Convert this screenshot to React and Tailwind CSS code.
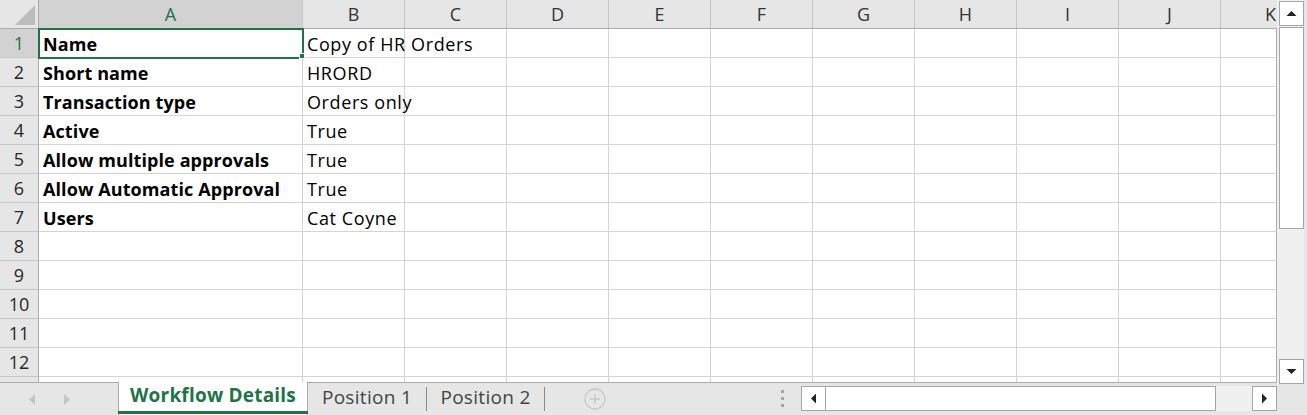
import React from "react";

const COLUMNS = [
  { label: "A", width: "w-[264px]" },
  { label: "B", width: "w-[102px]" },
  { label: "C", width: "w-[102px]" },
  { label: "D", width: "w-[102px]" },
  { label: "E", width: "w-[102px]" },
  { label: "F", width: "w-[102px]" },
  { label: "G", width: "w-[102px]" },
  { label: "H", width: "w-[102px]" },
  { label: "I", width: "w-[102px]" },
  { label: "J", width: "w-[102px]" },
  { label: "K", width: "w-[56px]" },
];

const ROWS = [
  ["Name", "Copy of HR Orders"],
  ["Short name", "HRORD"],
  ["Transaction type", "Orders only"],
  ["Active", "True"],
  ["Allow multiple approvals", "True"],
  ["Allow Automatic Approval", "True"],
  ["Users", "Cat Coyne"],
  ["", ""],
  ["", ""],
  ["", ""],
  ["", ""],
  ["", ""],
];

function HeaderRow() {
  return (
    <div className="flex h-[29px] border-b border-[#ababab] bg-[#e6e6e6]">
      <div className="flex w-[39px] shrink-0 items-end justify-end border-r border-[#ababab] pb-[3px] pr-[3px]">
        <svg width="20" height="20" viewBox="0 0 20 20">
          <polygon points="20,0 20,20 0,20" fill="#bcbcbc" />
        </svg>
      </div>
      {COLUMNS.map((col, i) => (
        <div
          key={col.label}
          className={`${col.width} flex shrink-0 items-center justify-center ${
            i === 0 ? "bg-[#d2d2d2] text-[#217346]" : "text-[#333]"
          } ${i < COLUMNS.length - 1 ? "border-r border-[#c6c6c6]" : ""}`}
        >
          <span className={i === COLUMNS.length - 1 ? "ml-auto pr-[1px]" : ""}>{col.label}</span>
        </div>
      ))}
    </div>
  );
}

function SheetRow({ index, label, value }) {
  return (
    <div className="flex h-[29px] shrink-0">
      <div
        className={`flex w-[39px] shrink-0 items-center justify-center border-r border-b border-[#ababab] ${
          index === 1 ? "bg-[#d2d2d2] text-[#217346]" : "bg-[#e6e6e6] text-[#262626]"
        } border-b-[#c6c6c6]`}
      >
        {index}
      </div>
      {COLUMNS.map((col, i) => (
        <div
          key={col.label}
          className={`${col.width} flex shrink-0 items-center overflow-visible whitespace-nowrap border-b border-[#d4d4d4] pl-[4px] pt-[1px] ${
            i < COLUMNS.length - 1 ? "border-r" : "border-r border-r-[#ababab]"
          }`}
        >
          {i === 0 ? <span className="font-bold tracking-[0.1px]">{label}</span> : null}
          {i === 1 ? <span className="tracking-[0.6px]">{value}</span> : null}
        </div>
      ))}
    </div>
  );
}

function ScrollButton({ dir }) {
  const points = {
    up: "0,6 5,1 10,6",
    down: "0,1 5,6 10,1",
    left: "6,0 1,5 6,10",
    right: "1,0 6,5 1,10",
  }[dir];
  const vertical = dir === "up" || dir === "down";
  return (
    <div className="flex h-[25px] w-[25px] shrink-0 items-center justify-center border border-[#a6a6a6] bg-white">
      <svg width={vertical ? 11 : 7} height={vertical ? 7 : 11} viewBox={vertical ? "0 0 10 7" : "0 0 7 10"}>
        <polygon points={points} fill="#222" />
      </svg>
    </div>
  );
}

export default function App() {
  return (
    <div
      className="flex h-[415px] w-[1307px] overflow-hidden bg-white text-[18px] leading-none text-black"
      style={{ fontFamily: '"Open Sans", "Liberation Sans", sans-serif' }}
    >
      <div className="flex w-[1277px] shrink-0 flex-col">
        {/* grid */}
        <div className="relative h-[382px] shrink-0 overflow-hidden">
          <HeaderRow />
          {ROWS.map((row, i) => (
            <SheetRow key={i} index={i + 1} label={row[0]} value={row[1]} />
          ))}
          <div className="flex h-[6px]">
            <div className="w-[39px] shrink-0 border-r border-[#ababab] bg-[#e6e6e6]" />
            {COLUMNS.map((col, i) => (
              <div
                key={col.label}
                className={`${col.width} shrink-0 border-r ${i < COLUMNS.length - 1 ? "border-[#d4d4d4]" : "border-[#ababab]"}`}
              />
            ))}
          </div>
          <div className="absolute left-[38px] top-[28px] h-[31px] w-[266px] border-2 border-[#217346]" />
          <div className="absolute left-[299px] top-[53px] h-[6px] w-[6px] border border-white bg-[#217346]" />
        </div>

        {/* sheet tabs */}
        <div className="flex h-[33px] shrink-0 items-stretch border-t border-[#ababab] bg-[#e6e6e6] text-[19px]">
          <div className="flex w-[118px] shrink-0 items-center gap-[29px] pl-[29px]">
            <svg width="6" height="11" viewBox="0 0 6 11">
              <polygon points="6,0 0,5.5 6,11" fill="#c4c4c4" />
            </svg>
            <svg width="6" height="11" viewBox="0 0 6 11">
              <polygon points="0,0 6,5.5 0,11" fill="#c4c4c4" />
            </svg>
          </div>
          <div className="-mt-[1px] flex w-[190px] shrink-0 flex-col border-x border-[#ababab] bg-white">
            <div className="flex flex-1 items-center justify-center pb-[2px] font-bold tracking-[0.2px] text-[#217346]">
              Workflow Details
            </div>
            <div className="mx-[-1px] mb-[1px] h-[3px] bg-[#217346]" />
          </div>
          <div className="flex w-[118px] shrink-0 items-center justify-center pb-[3px] tracking-[0.3px] text-[#444]">
            Position 1
          </div>
          <div className="my-[4px] w-px shrink-0 bg-[#8a8a8a]" />
          <div className="flex w-[117px] shrink-0 items-center justify-center pb-[3px] tracking-[0.3px] text-[#444]">
            Position 2
          </div>
          <div className="my-[4px] w-px shrink-0 bg-[#8a8a8a]" />
          <div className="flex w-[100px] shrink-0 items-center justify-center">
            <svg width="22" height="22" viewBox="0 0 22 22">
              <circle cx="11" cy="11" r="10" fill="none" stroke="#c8c8c8" strokeWidth="1.3" />
              <path d="M11 6v10M6 11h10" stroke="#c8c8c8" strokeWidth="1.3" />
            </svg>
          </div>
          <div className="flex flex-1 items-center justify-end pr-[17px]">
            <div className="flex flex-col gap-[4px] pb-[1px]">
              <div className="h-[3px] w-[3px] bg-[#a6a6a6]" />
              <div className="h-[3px] w-[3px] bg-[#a6a6a6]" />
              <div className="h-[3px] w-[3px] bg-[#a6a6a6]" />
            </div>
          </div>
          <div className="mb-[4px] mt-[3px] flex w-[476px] shrink-0 bg-[#f0f0f0]">
            <ScrollButton dir="left" />
            <div className="-ml-px h-[25px] w-[391px] shrink-0 border border-[#a6a6a6] bg-white" />
            <div className="flex-1" />
            <ScrollButton dir="right" />
          </div>
        </div>
      </div>

      {/* vertical scrollbar */}
      <div className="flex w-[30px] shrink-0 flex-col bg-[#e6e6e6]">
        <div className="flex h-[384px] w-[27px] shrink-0 flex-col bg-[#f0f0f0] pl-[2px] pt-[1px]">
          <ScrollButton dir="up" />
          <div className="mt-[1px] h-[202px] w-[25px] border border-[#a6a6a6] bg-white" />
          <div className="flex-1" />
          <ScrollButton dir="down" />
        </div>
      </div>
    </div>
  );
}
